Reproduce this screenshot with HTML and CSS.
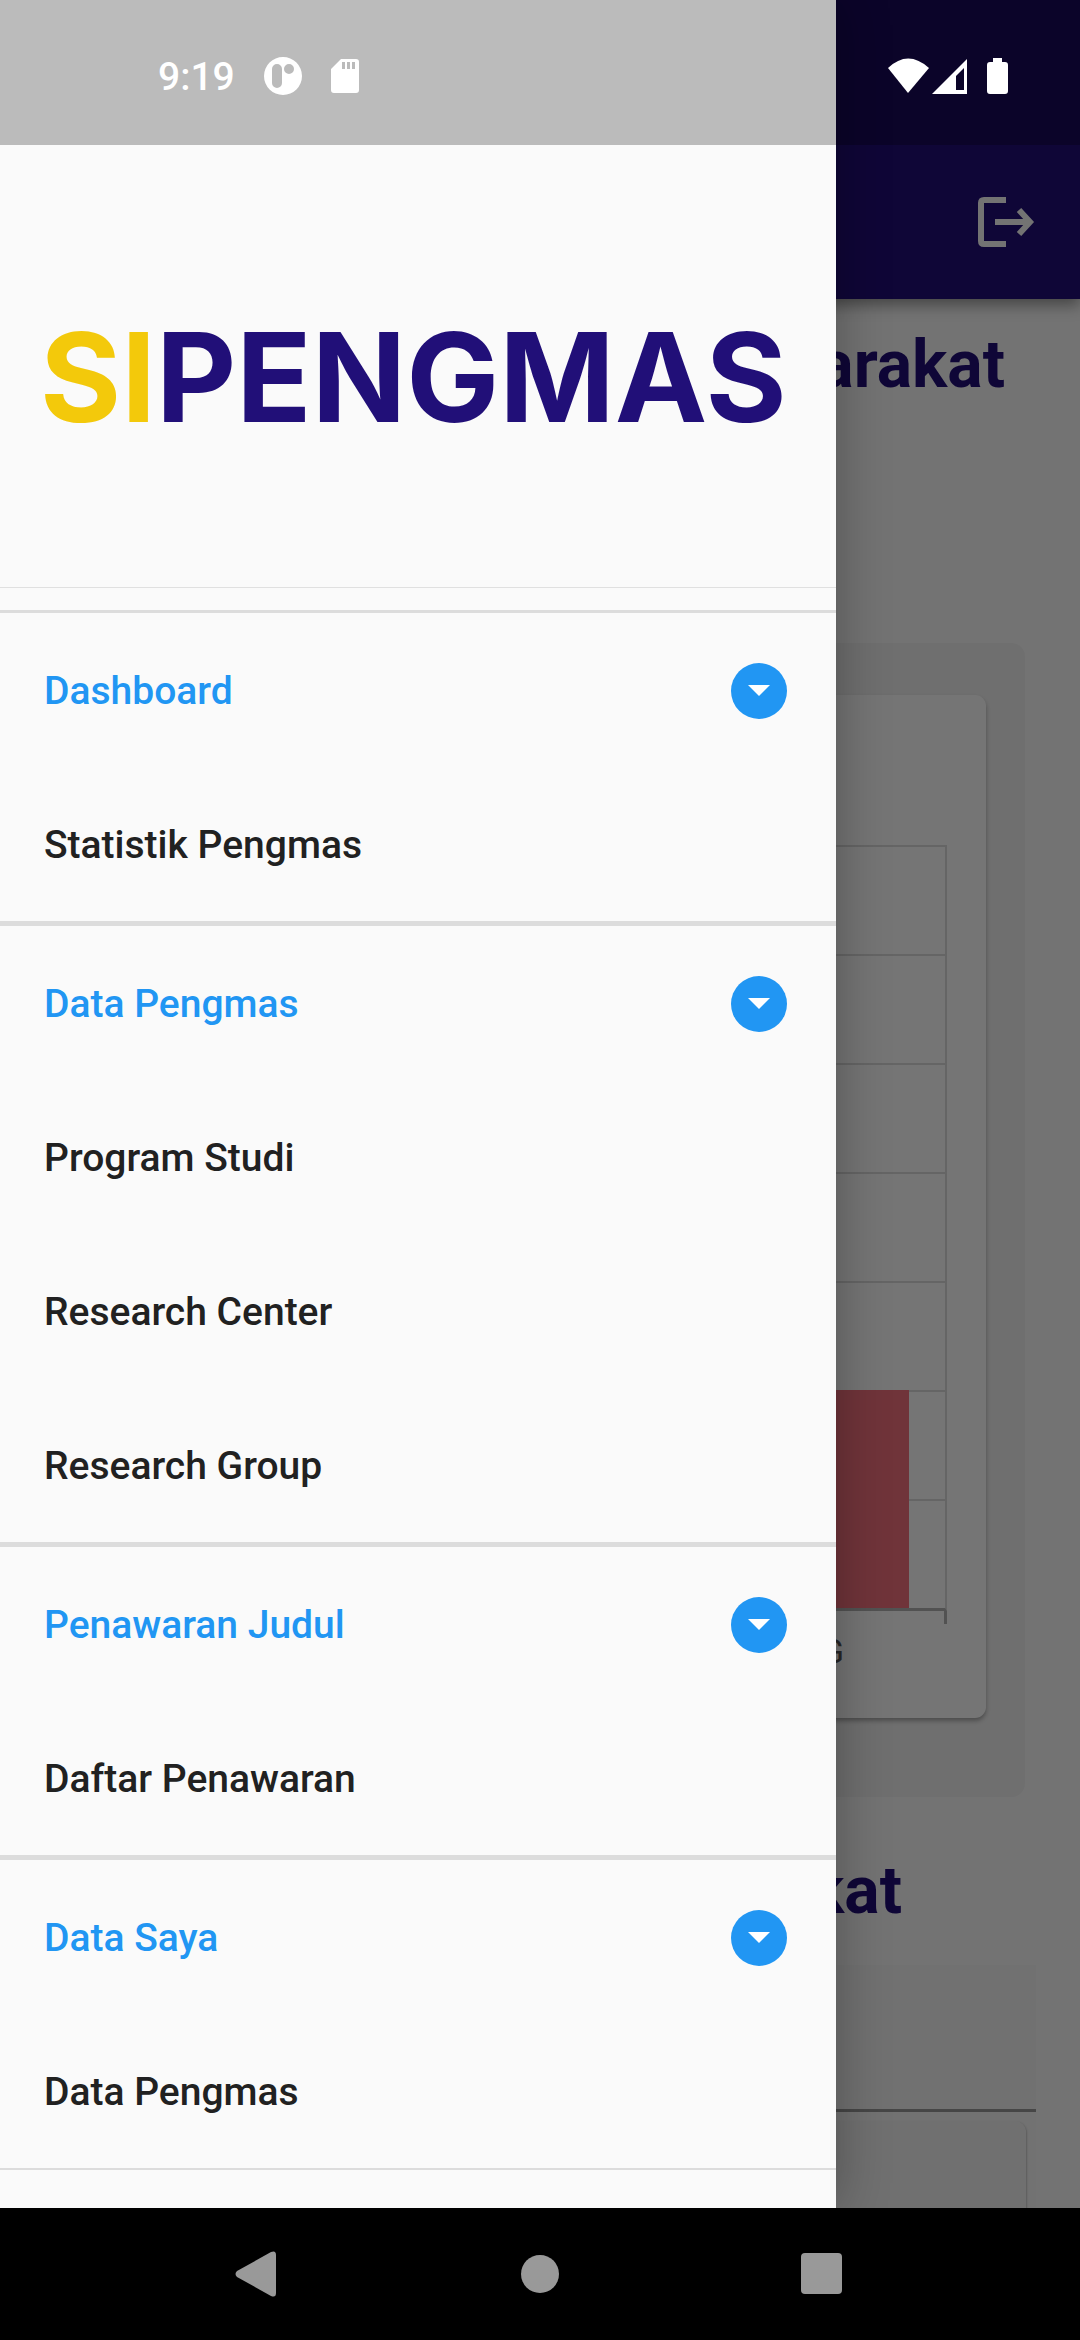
FILE: index.html
```html
<!DOCTYPE html>
<html lang="id">
<head>
<meta charset="utf-8">
<meta name="viewport" content="width=device-width, initial-scale=1">
<title>SIPENGMAS</title>
<link rel="stylesheet" href="styles.css">
</head>
<body>
<div class="app">
  <div class="page">
    <header class="app-bar">
      <button class="logout" aria-label="Keluar">
        <svg width="66" height="66" viewBox="0 0 66 66" fill="none" stroke="currentColor" stroke-width="6">
          <path d="M36 11H14Q11 11 11 14V52Q11 55 14 55H36"/>
          <path d="M25 33H59M49 21L60 33L49 45"/>
        </svg>
      </button>
    </header>
    <main class="content">
      <h1 class="title">Masyarakat</h1>
      <section class="chart-panel">
        <div class="chart-card">
          <div class="plot">
            <div class="row"></div><div class="row"></div><div class="row"></div><div class="row"></div>
            <div class="row"></div><div class="row"></div><div class="row"></div>
            <div class="bar"></div>
          </div>
          <div class="tick"></div>
          <div class="axis-label">RG</div>
        </div>
      </section>
      <h2 class="title title-second">Masyarakat</h2>
      <section class="list">
        <div class="list-head"></div>
        <div class="list-body"><div class="list-card"></div></div>
      </section>
    </main>
    <div class="scrim"></div>
    <aside class="drawer">
      <div class="brand"><span class="brand-si">SI</span>PENGMAS</div>
      <nav class="menu">
        <section class="group">
          <button class="group-head">Dashboard <svg class="chevron" width="56" height="56" viewBox="0 0 56 56"><circle cx="28" cy="28" r="28"/><path d="M17 22H39L28 33Z"/></svg></button>
          <a class="item" href="#statistik">Statistik Pengmas</a>
        </section>
        <section class="group">
          <button class="group-head">Data Pengmas <svg class="chevron" width="56" height="56" viewBox="0 0 56 56"><circle cx="28" cy="28" r="28"/><path d="M17 22H39L28 33Z"/></svg></button>
          <a class="item" href="#prodi">Program Studi</a>
          <a class="item" href="#center">Research Center</a>
          <a class="item" href="#group">Research Group</a>
        </section>
        <section class="group">
          <button class="group-head">Penawaran Judul <svg class="chevron" width="56" height="56" viewBox="0 0 56 56"><circle cx="28" cy="28" r="28"/><path d="M17 22H39L28 33Z"/></svg></button>
          <a class="item" href="#penawaran">Daftar Penawaran</a>
        </section>
        <section class="group">
          <button class="group-head">Data Saya <svg class="chevron" width="56" height="56" viewBox="0 0 56 56"><circle cx="28" cy="28" r="28"/><path d="M17 22H39L28 33Z"/></svg></button>
          <a class="item" href="#saya">Data Pengmas</a>
        </section>
      </nav>
    </aside>
    <div class="status-bar">
      <div class="status-left">
        <span class="time">9:19</span>
        <svg width="38" height="38" viewBox="0 0 38 38"><path fill="#fff" fill-rule="evenodd" d="M19 0a19 19 0 1 0 0 38a19 19 0 1 0 0-38ZM13 7a5 5 0 0 1 5 5V26a5 5 0 0 1-10 0V12a5 5 0 0 1 5-5ZM25 7a5 5 0 1 1 0 10a5 5 0 1 1 0-10Z"/></svg>
        <svg width="28" height="36" viewBox="0 0 28 36"><path fill="#fff" fill-rule="evenodd" d="M10 1H25Q28 1 28 4V32Q28 35 25 35H3Q0 35 0 32V11ZM11 4V11H14V4ZM16 4V11H19V4ZM21 4V11H24V4Z"/></svg>
      </div>
      <svg width="122" height="38" viewBox="0 0 122 38" fill="#fff"><path d="M0 11Q20-8 41 11L20 36Z"/><path fill-rule="evenodd" d="M79 2V37H44ZM76 11L68 19V33H76Z"/><path d="M105 1H114V5H117Q120 5 120 8V34Q120 37 117 37H102Q99 37 99 34V8Q99 5 102 5H105Z"/></svg>
    </div>
  </div>
  <footer class="nav-bar">
    <button class="nav-button" aria-label="Kembali"><svg width="46" height="46" viewBox="0 0 46 46"><path d="M2 20L36 1Q41-1 41 4V42Q41 47 36 45L2 26Q-1 23 2 20Z"/></svg></button>
    <button class="nav-button" aria-label="Beranda"><svg width="40" height="40" viewBox="0 0 40 40"><circle cx="20" cy="20" r="19"/></svg></button>
    <button class="nav-button" aria-label="Terbaru"><svg width="42" height="42" viewBox="0 0 42 42"><rect width="41" height="41" rx="4"/></svg></button>
  </footer>
</div>
</body>
</html>
```

FILE: styles.css
```css
* { box-sizing: border-box; }
body { margin: 0; background: #000; font-family: Roboto, "Noto Sans", sans-serif; }
button { border: 0; padding: 0; background: none; font: inherit; color: inherit; }
svg { display: block; flex: none; }

.app { display: flex; flex-direction: column; height: 100vh; }
.page { position: relative; flex: 1; min-height: 0; overflow: hidden; background: #fafafa; }

/* App bar and page content */
.app-bar {
  position: relative;
  display: flex;
  justify-content: flex-end;
  padding: 189px 44px 44px;
  background: #210f78;
  box-shadow: 0 6px 14px rgba(0, 0, 0, .4);
}
.logout { color: #fafafa; }
.content { text-align: right; }
.title { margin: 0; padding: 28px 75px 0; font-size: 66px; line-height: 76px; font-weight: 700; color: #210f78; }
.title-second { padding: 56px 178px 0; }

.chart-panel { margin: 240px 55px 0; padding: 52px 39px 79px; border-radius: 14px; background: #f1f1f1; }
.chart-card { padding: 150px 39px 44px; border-radius: 11px; background: #fff; box-shadow: 0 3px 4px rgba(0, 0, 0, .3); }
.plot { position: relative; border-right: 2px solid #dcdcdc; border-bottom: 3px solid #b4b4b4; }
.row { height: 109px; border-top: 2px solid #dcdcdc; }
.bar { position: absolute; right: 36px; bottom: 0; width: 200px; height: 218px; background: #f3717e; }
.tick { height: 13px; border-right: 3px solid #b4b4b4; }
.axis-label { padding: 6px 103px 0; font-size: 33px; line-height: 44px; color: #555; }

.list { margin: 36px 44px 0; background: #f8f8f8; }
.list-head { height: 147px; background: #f6f6f6; border-bottom: 3px solid #999; }
.list-body { padding: 9px 10px 0; }
.list-card { height: 200px; border-radius: 11px; background: #f5f5f5; box-shadow: 1px 1px 2px rgba(0, 0, 0, .2); }

.scrim { position: absolute; inset: 0; background: rgba(0, 0, 0, .54); }

/* Navigation drawer */
.drawer {
  position: absolute;
  inset: 0 auto 0 0;
  width: 836px;
  max-width: 80%;
  overflow: hidden;
  padding-top: 145px;
  background: #fafafa;
  box-shadow: 0 0 50px rgba(0, 0, 0, .3);
}
.brand {
  padding: 158px 0 136px 40px;
  border-bottom: 1px solid #e0e0e0;
  font: 700 124px/148px Inter, sans-serif;
  color: #210f78;
}
.brand-si { color: #f3c90b; }
.menu { margin-top: 22px; }
.group { border-top: 3px solid #dcdcdc; border-bottom: 2px solid #dcdcdc; }
.group-head, .item {
  display: flex;
  align-items: center;
  justify-content: space-between;
  width: 100%;
  height: 154px;
  padding: 2px 49px 0 44px;
  font-size: 39px;
  font-weight: 500;
  color: #212121;
  text-decoration: none;
}
.group-head { color: #2196f3; }
.chevron circle { fill: #2196f3; }
.chevron path { fill: #fff; }

/* System bars */
.status-bar {
  position: absolute;
  inset: 0 0 auto;
  display: flex;
  align-items: center;
  justify-content: space-between;
  height: 145px;
  padding: 6px 70px 0 158px;
  background: rgba(0, 0, 0, .25);
}
.status-left { display: flex; align-items: center; gap: 29px; }
.time { padding-top: 2px; font-size: 39px; font-weight: 500; color: #fff; }
.nav-bar { display: flex; justify-content: center; height: 132px; background: #000; }
.nav-button { display: flex; align-items: center; justify-content: center; width: 282px; }
.nav-button svg { fill: #999; }
```
